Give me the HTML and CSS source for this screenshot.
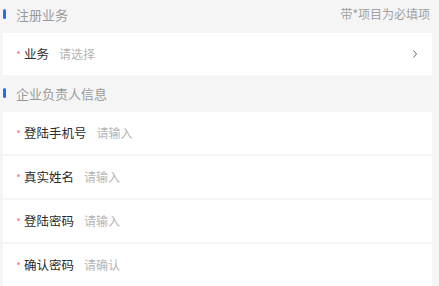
FILE: index.html
```html
<!DOCTYPE html>
<html lang="zh">
<head>
<meta charset="utf-8">
<link rel="stylesheet" href="styles.css">
</head>
<body>
<div class="page">
  <div class="section-head first">
    <span class="bar"></span>
    <span class="title">注册业务</span>
    <span class="note">带*项目为必填项</span>
  </div>
  <div class="row">
    <span class="dot"></span>
    <span class="label">业务</span>
    <span class="ph">请选择</span>
    <svg class="chev" width="6" height="10" viewBox="0 0 6 10"><polyline points="1.5,1.5 4.5,5 1.5,8.5" fill="none" stroke="#666" stroke-width="1"/></svg>
  </div>
  <div class="section-head second">
    <span class="bar"></span>
    <span class="title">企业负责人信息</span>
  </div>
  <div class="list">
    <div class="row"><span class="dot"></span><span class="label">登陆手机号</span><span class="ph">请输入</span></div>
    <div class="row"><span class="dot"></span><span class="label">真实姓名</span><span class="ph">请输入</span></div>
    <div class="row"><span class="dot"></span><span class="label">登陆密码</span><span class="ph">请输入</span></div>
    <div class="row"><span class="dot"></span><span class="label">确认密码</span><span class="ph">请确认</span></div>
  </div>
</div>
</body>
</html>
```
FILE: styles.css
```css
html, body {
  margin: 0;
  padding: 0;
  background: #f5f5f6;
  font-family: "Noto Sans CJK SC", "Noto Sans", sans-serif;
}
.page {
  width: 429px;
  margin-left: 3px;
}
.section-head {
  display: flex;
  align-items: center;
  padding-right: 2px;
}
.section-head.first {
  height: 28px;
  padding-bottom: 5px;
}
.section-head.second {
  height: 37px;
  padding-bottom: 1px;
  box-sizing: border-box;
}
.bar {
  width: 3px;
  height: 10px;
  border-radius: 2px;
  background: #2a6cf0;
}
.title {
  margin-left: 10px;
  font-size: 13px;
  color: #9a9a9a;
  line-height: 1;
}
.note {
  margin-left: auto;
  font-size: 12px;
  color: #a0a0a0;
  line-height: 1;
}
.list {
  display: flex;
  flex-direction: column;
  gap: 2px;
}
.row {
  display: flex;
  align-items: center;
  height: 42px;
  background: #fff;
  padding-left: 14px;
  padding-right: 14px;
}
.dot {
  width: 3px;
  height: 3px;
  border-radius: 50%;
  background: #f590a0;
  margin-right: 4px;
  margin-top: -3px;
}
.label {
  font-size: 12.5px;
  color: #2b2b2b;
  line-height: 1;
}
.ph {
  margin-left: 10px;
  font-size: 12px;
  color: #b5b5b5;
  line-height: 1;
}
.chev {
  margin-left: auto;
}
```
